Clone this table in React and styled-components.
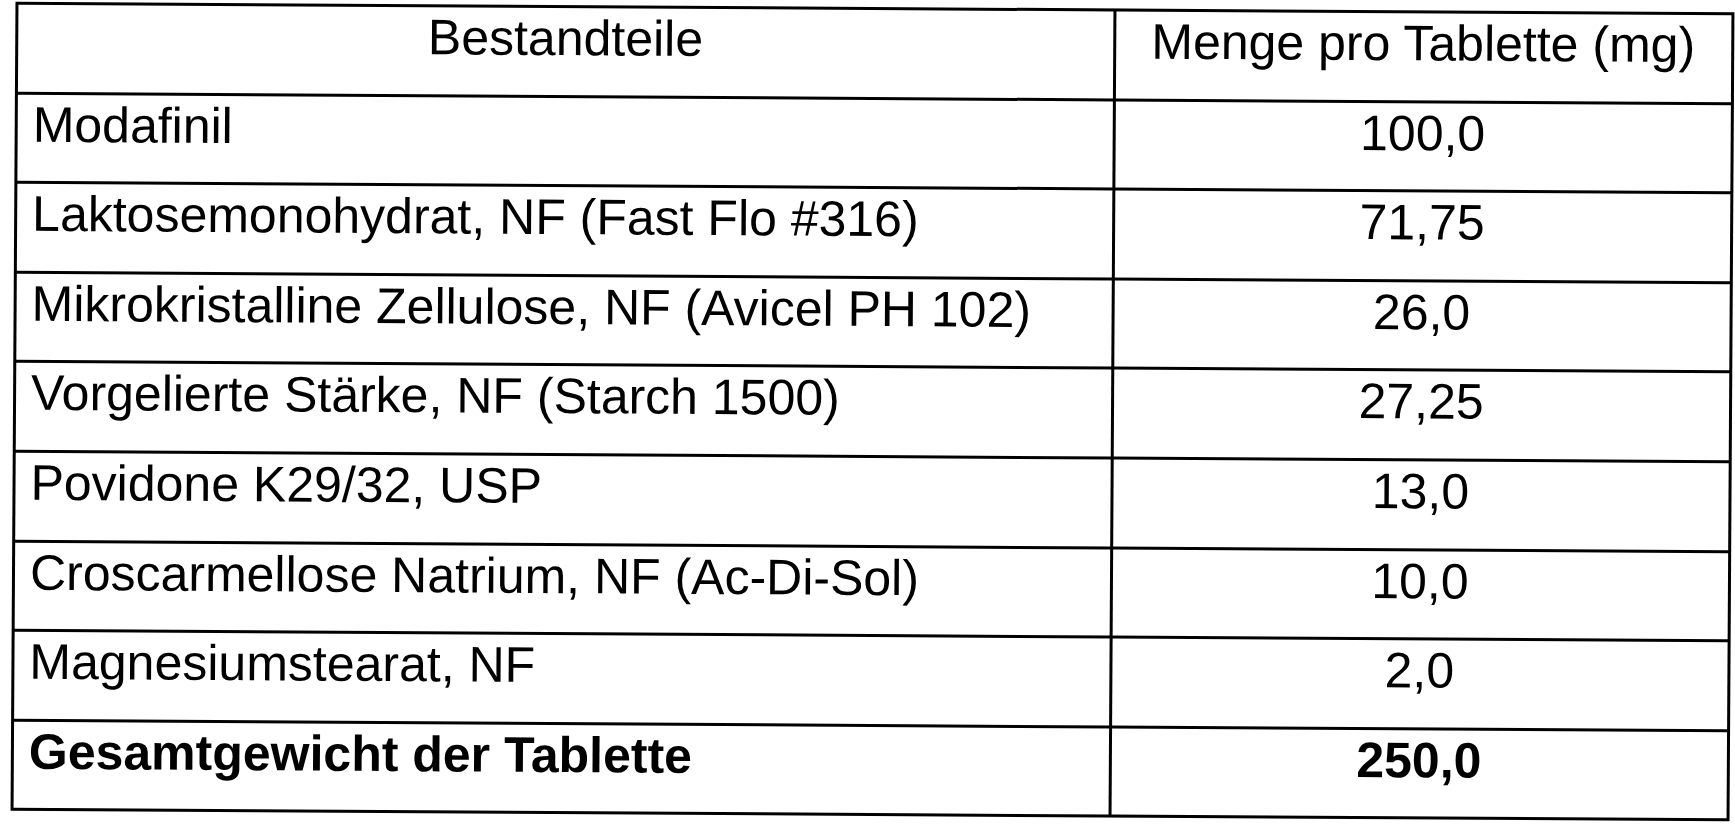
import React from "react";
import styled, { createGlobalStyle } from "styled-components";

const Global = createGlobalStyle`
  html, body {
    margin: 0;
    padding: 0;
    background: #ffffff;
  }
  body {
    font-family: "Liberation Sans", Arial, sans-serif;
    color: #000;
    overflow: hidden;
  }
`;

const Page = styled.div`
  width: 1735px;
  height: 827px;
  box-sizing: border-box;
  padding: 6.8px 0 0 13px;
  background: #fff;
`;

const Table = styled.div`
  display: grid;
  grid-template-columns: 1094.5px 615px;
  grid-auto-rows: 86.6px;
  gap: 3px;
  padding: 3px;
  width: fit-content;
  background: #000;
  transform: rotate(0.35deg);
  transform-origin: 50% 50%;
`;

const Cell = styled.div`
  background: #fff;
  box-sizing: border-box;
  padding: 2px 15px 0 15px;
  font-family: "Liberation Sans", Arial, sans-serif;
  font-size: 50px;
  line-height: 1.15;
  font-weight: ${(p) => (p.$bold ? 700 : 400)};
  text-align: ${(p) => (p.$center ? "center" : "left")};
  white-space: nowrap;
  color: #000;
`;

const rows = [
  ["Modafinil", "100,0"],
  ["Laktosemonohydrat, NF (Fast Flo #316)", "71,75"],
  ["Mikrokristalline Zellulose, NF (Avicel PH 102)", "26,0"],
  ["Vorgelierte Stärke, NF (Starch 1500)", "27,25"],
  ["Povidone K29/32, USP", "13,0"],
  ["Croscarmellose Natrium, NF (Ac-Di-Sol)", "10,0"],
  ["Magnesiumstearat, NF", "2,0"],
];

export default function App() {
  return (
    <>
      <Global />
      <Page>
        <Table>
          <Cell $center>Bestandteile</Cell>
          <Cell $center>Menge pro Tablette (mg)</Cell>
          {rows.map(([name, amount]) => (
            <React.Fragment key={name}>
              <Cell>{name}</Cell>
              <Cell $center>{amount}</Cell>
            </React.Fragment>
          ))}
          <Cell $bold>Gesamtgewicht der Tablette</Cell>
          <Cell $bold $center>250,0</Cell>
        </Table>
      </Page>
    </>
  );
}
